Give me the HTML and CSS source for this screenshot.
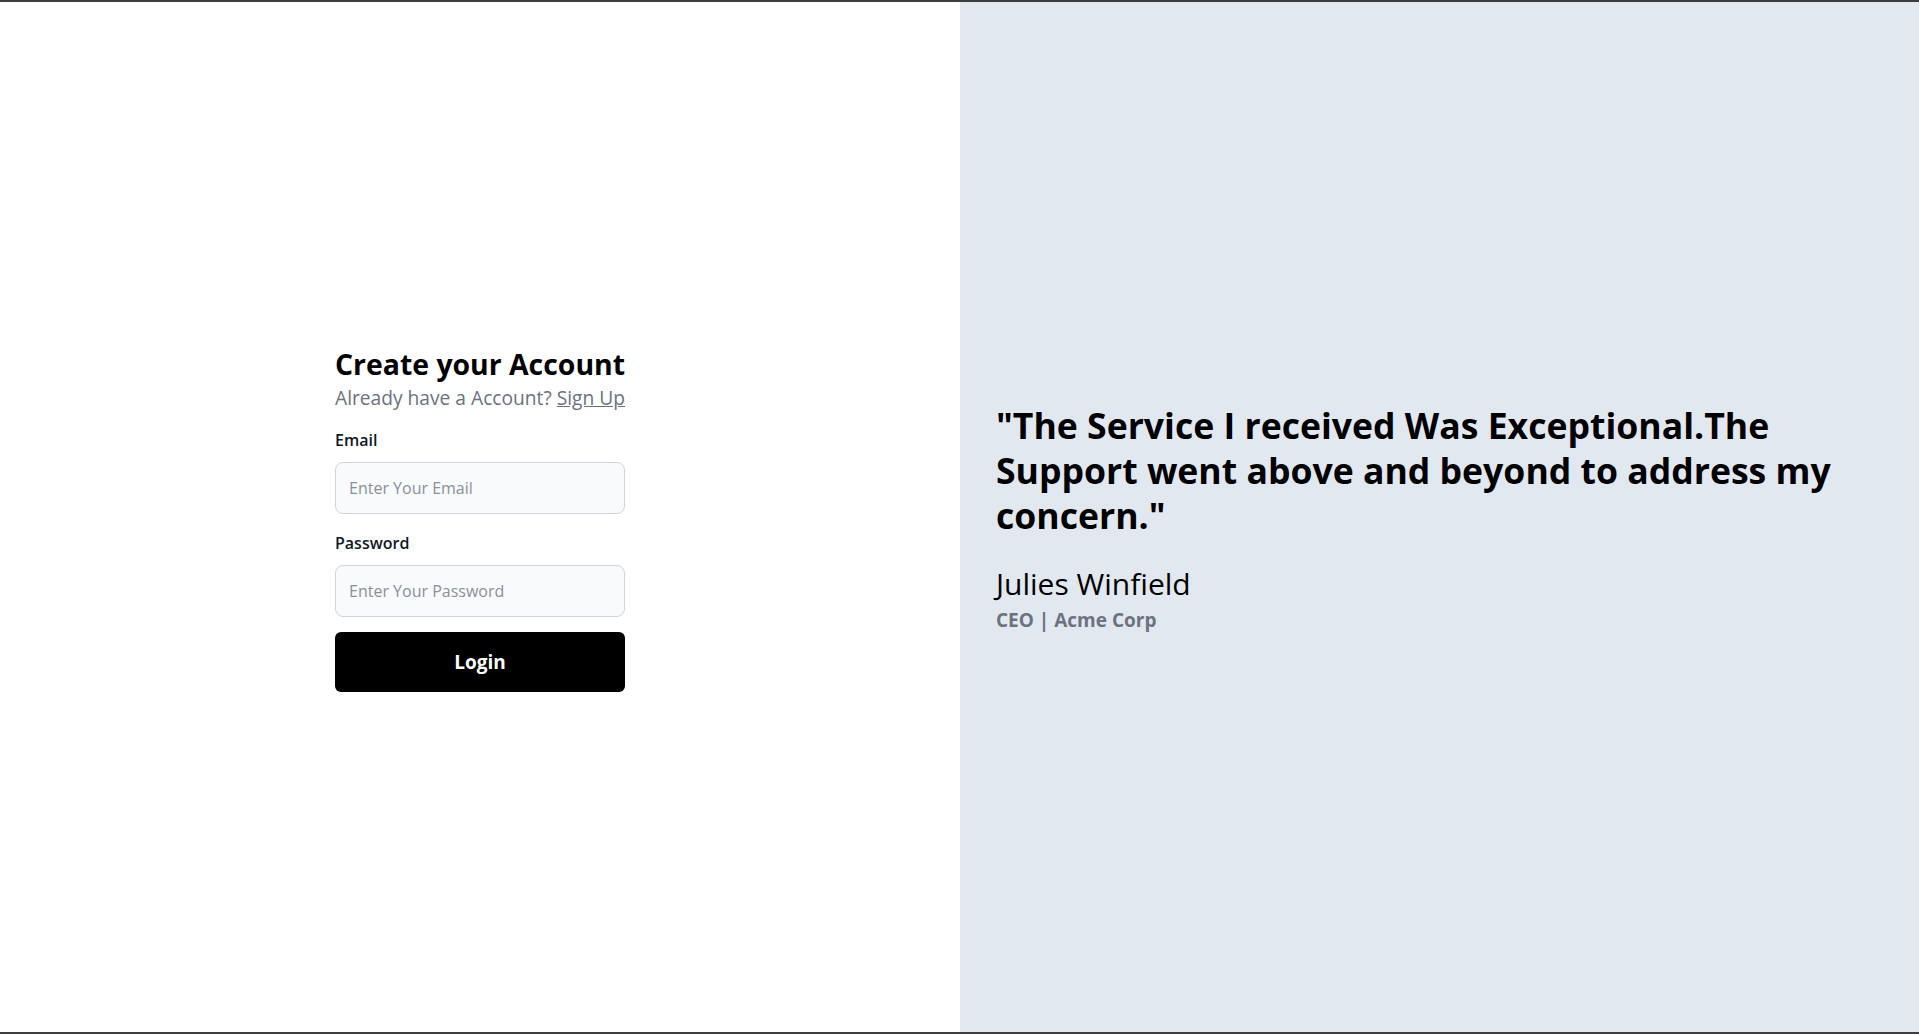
FILE: index.html
```html
<!DOCTYPE html>
<html lang="en">
<head>
<meta charset="utf-8">
<title>Create your Account</title>
<link rel="stylesheet" href="styles.css">
</head>
<body>
<main class="layout">
  <section class="left">
    <form class="form">
      <h1 class="title">Create your Account</h1>
      <p class="subtitle">Already have a Account? <a href="#" class="link">Sign Up</a></p>
      <label class="label label-first" for="email">Email</label>
      <input class="input" id="email" type="email" placeholder="Enter Your Email">
      <label class="label" for="password">Password</label>
      <input class="input" id="password" type="password" placeholder="Enter Your Password">
      <button class="button" type="button">Login</button>
    </form>
  </section>
  <section class="right">
    <div class="testimonial">
      <p class="quote">"The Service I received Was Exceptional.The Support went above and beyond to address my concern."</p>
      <p class="name">Julies Winfield</p>
      <p class="role">CEO | Acme Corp</p>
    </div>
  </section>
</main>
</body>
</html>
```

FILE: styles.css
```css
* { box-sizing: border-box; }
html, body { margin: 0; padding: 0; }
body {
  font-family: "Open Sans", "Noto Sans", sans-serif;
  color: #000;
  border-top: 2px solid #3c3c3c;
  border-bottom: 2px solid #3c3c3c;
  height: 1034px;
  overflow: hidden;
}
.layout {
  display: grid;
  grid-template-columns: 960px 1fr;
  height: 1030px;
}
.left {
  background: #fff;
  display: flex;
  align-items: center;
  justify-content: center;
}
.form {
  display: flex;
  flex-direction: column;
  width: 290px;
  padding-top: 2px;
}
.title {
  margin: 0;
  font-size: 28.4px;
  line-height: 40px;
  font-weight: 700;
  white-space: nowrap;
}
.subtitle {
  margin: 0;
  font-size: 19.2px;
  line-height: 28px;
  color: #6b7280;
  white-space: nowrap;
}
.link { color: #6b7280; text-decoration: underline; }
.label {
  margin-top: 17px;
  margin-bottom: 10px;
  font-size: 16px;
  line-height: 24px;
  font-weight: 600;
  color: #111827;
}
.label-first { margin-top: 16px; }
.input {
  width: 100%;
  height: 52px;
  padding: 0 13px;
  border: 1px solid #d1d5db;
  border-radius: 8px;
  background: #f8fafc;
  font-family: inherit;
  font-size: 16px;
  color: #111827;
}
.input::placeholder { color: #8a909b; }
.button {
  margin-top: 15px;
  height: 60px;
  border: 0;
  border-radius: 6px;
  background: #000;
  color: #fff;
  font-family: inherit;
  font-size: 19px;
  font-weight: 700;
}
.right {
  background: #e2e8f0;
  display: flex;
  align-items: center;
  padding: 0 36px;
}
.testimonial { width: 100%; padding-top: 2px; }
.quote {
  margin: 0;
  font-size: 35.6px;
  line-height: 45px;
  font-weight: 700;
}
.name {
  margin: 28px 0 0;
  font-size: 30px;
  line-height: 36px;
}
.role {
  margin: 4px 0 0;
  font-size: 19px;
  line-height: 28px;
  font-weight: 700;
  color: #6b7280;
}
```
